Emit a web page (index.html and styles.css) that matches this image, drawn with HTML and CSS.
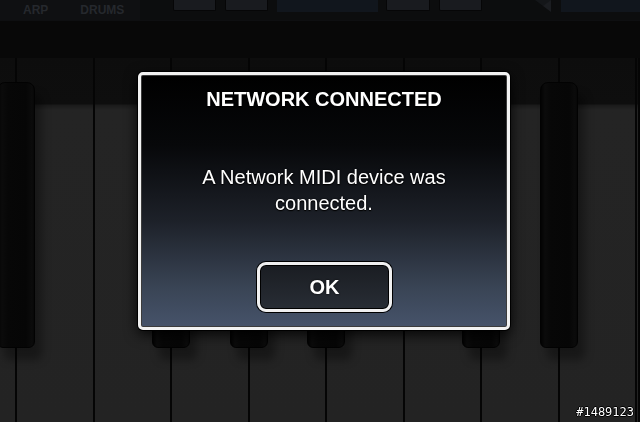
FILE: index.html
```html
<!DOCTYPE html>
<html lang="en">
<head>
    <meta charset="UTF-8">
    <meta name="viewport" content="width=device-width, initial-scale=1.0">
    <title>Network MIDI</title>
    <link rel="stylesheet" href="styles.css">
</head>
<body>
    <div class="topbar">
        <div class="tabs">
            <span class="tab">ARP</span>
            <span class="tab">DRUMS</span>
        </div>
        <div class="pad pad-first"></div>
        <div class="pad"></div>
        <div class="screen screen-a"></div>
        <div class="pad pad-b"></div>
        <div class="pad"></div>
        <div class="arrow"></div>
        <div class="screen screen-b"></div>
    </div>

    <div class="keyboard">
        <div class="key key-edge black"></div>
        <div class="key"></div>
        <div class="key black"></div>
        <div class="key black"></div>
        <div class="key black"></div>
        <div class="key"></div>
        <div class="key black"></div>
        <div class="key black"></div>
        <div class="key"></div>
        <div class="key key-last"></div>
    </div>

    <!-- modal -->
    <div class="overlay">
        <div class="dialog">
            <h1 class="dialog-title">NETWORK CONNECTED</h1>
            <p class="dialog-text">A Network MIDI device was<br>connected.</p>
            <button class="dialog-btn">OK</button>
        </div>
    </div>

    <div class="tag">#1489123</div>
</body>
</html>
```

FILE: styles.css
```css
html {
    background: #080808;
}

body {
    margin: 0;
    height: 422px;
    overflow: hidden;
    background: #080808;
    font-family: 'Liberation Sans', Arial, sans-serif;
}

/* top strip */
.topbar {
    display: flex;
    align-items: flex-start;
    height: 20px;
    background: #0c0d0e;
    border-bottom: 1px solid #0e0f11;
}

.tabs {
    display: flex;
    gap: 32px;
    width: 140px;
    height: 20px;
    padding-left: 23px;
    box-sizing: border-box;
    background: #0f1012;
}

.tab {
    font-size: 12px;
    font-weight: bold;
    line-height: 20px;
    color: #25282d;
}

.pad {
    width: 43px;
    height: 11px;
    margin-left: 9px;
    background: #191b1f;
    border: 1px solid #060607;
    border-top: none;
    border-radius: 0 0 2px 2px;
    box-sizing: border-box;
}

.pad-first { margin-left: 33px; }
.pad-b { margin-left: 8px; width: 44px; }

.screen {
    height: 12px;
    background: #11161d;
}

.screen-a {
    width: 101px;
    margin-left: 9px;
}

.screen-b {
    flex: 1;
    margin-left: 10px;
}

.arrow {
    width: 0;
    height: 0;
    margin-left: 53px;
    border-top: 6px solid #141619;
    border-left: 8px solid transparent;
    border-right: 8px solid #1b1d21;
    border-bottom: 6px solid transparent;
}

/* keys */
.keyboard {
    display: flex;
    margin-top: 37px;
    height: 364px;
    overflow: hidden;
}

.key {
    position: relative;
    flex: 0 0 77.5px;
    box-sizing: border-box;
    border-right: 2px solid #050505;
    background: linear-gradient(#0d0d0d 0, #0e0e0e 46px, #1a1a1a 47px, #242424 52px, #232323 100%);
}

.key-edge { flex-basis: 17px; }
.key-last { flex: 1; }

.key.black::after {
    content: '';
    position: absolute;
    top: 24px;
    right: -20px;
    width: 38px;
    height: 266px;
    box-sizing: border-box;
    background: linear-gradient(90deg, #030303 0, #0b0b0b 4px, #070707 10px, #060606 28px, #0b0b0b 34px, #030303 38px);
    border: 1px solid #020202;
    border-radius: 8px 8px 6px 6px;
    box-shadow: 7px 12px 8px rgba(0, 0, 0, 0.35);
    z-index: 1;
}

/* modal */
.overlay {
    position: fixed;
    top: 0;
    left: 0;
    right: 0;
    bottom: 0;
    padding: 72px 0 0 138px;
    z-index: 5;
}

.dialog {
    display: flex;
    flex-direction: column;
    align-items: center;
    width: 372px;
    height: 258px;
    box-sizing: border-box;
    padding: 12px 0 15px;
    border: 3px solid #f2f2f2;
    border-radius: 5px;
    background: linear-gradient(#000 0%, #07080a 28%, #1d2129 58%, #3a4556 85%, #46536a 100%);
    box-shadow: 0 0 0 1px #000, inset 0 0 0 1px #3c3c3c, 0 4px 14px rgba(0, 0, 0, 0.9);
    color: #fff;
    text-shadow: 0 0 2px #000, 0 1px 1px #000;
}

.dialog-title {
    margin: 0;
    font-size: 20px;
    line-height: 24px;
    font-weight: bold;
}

.dialog-text {
    margin: 53px 0 0;
    font-size: 20px;
    line-height: 26px;
    text-align: center;
}

.dialog-btn {
    margin-top: auto;
    width: 135px;
    height: 50px;
    border: 3px solid #f0f0f0;
    border-radius: 9px;
    background: linear-gradient(#1a1d22, #282d35);
    box-shadow: 0 0 0 1px #000, inset 0 0 0 1px #000;
    color: #fff;
    font-family: inherit;
    font-size: 20px;
    font-weight: bold;
    text-shadow: 0 0 2px #000;
    margin-left: 1px;
}

.tag {
    position: fixed;
    right: 6px;
    bottom: 3px;
    font-family: 'DejaVu Sans Mono', monospace;
    font-size: 12px;
    color: #fff;
    text-shadow: 1px 0 #000, -1px 0 #000, 0 1px #000, 0 -1px #000;
    z-index: 6;
}
```
